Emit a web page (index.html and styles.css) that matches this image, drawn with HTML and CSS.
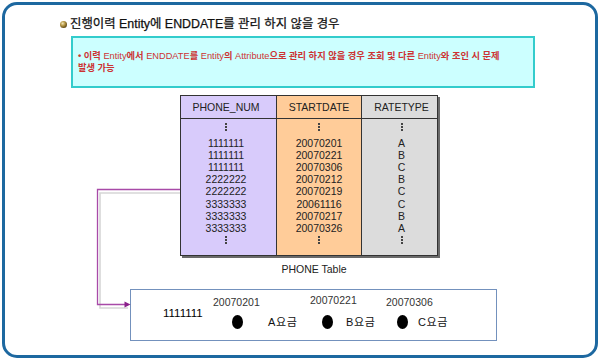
FILE: index.html
```html
<!DOCTYPE html>
<html lang="ko">
<head>
<meta charset="utf-8">
<title>ENDDATE</title>
<link rel="stylesheet" href="styles.css">
</head>
<body>
<div class="panel">
  <svg class="link" width="596" height="356" viewBox="5 5 596 356" aria-hidden="true">
    <polyline points="180,193 100,193 100,308 128,308" fill="none" stroke="#d6d6d6" stroke-width="1.6"/>
    <polyline points="180,189.5 97.5,189.5 97.5,304.5 125,304.5" fill="none" stroke="#a84aa8" stroke-width="1.3"/>
    <polygon points="130.5,304.5 124.5,301.5 124.5,307.5" fill="#8a1f8a"/>
  </svg>

  <h1 class="title"><span class="ball"></span>진행이력 Entity에 ENDDATE를 관리 하지 않을 경우</h1>

  <div class="note">
    <p>• 이력 <span class="en">Entity</span>에서 <span class="en">ENDDATE</span>를 <span class="en">Entity</span>의 <span class="en">Attribute</span>으로 관리 하지 않을 경우 조회 및 다른 <span class="en">Entity</span>와 조인 시 문제<br>발생 가능</p>
  </div>

  <div class="tbl">
    <div class="col c1">
      <div class="th">PHONE_NUM</div>
      <div class="td">
        <i class="vdots"></i>
        <div class="rows">
          <span>1111111</span><span>1111111</span><span>1111111</span><span>2222222</span>
          <span>2222222</span><span>3333333</span><span>3333333</span><span>3333333</span>
        </div>
        <i class="vdots"></i>
      </div>
    </div>
    <div class="col c2">
      <div class="th">STARTDATE</div>
      <div class="td">
        <i class="vdots"></i>
        <div class="rows">
          <span>20070201</span><span>20070221</span><span>20070306</span><span>20070212</span>
          <span>20070219</span><span>20061116</span><span>20070217</span><span>20070326</span>
        </div>
        <i class="vdots"></i>
      </div>
    </div>
    <div class="col c3">
      <div class="th">RATETYPE</div>
      <div class="td">
        <i class="vdots"></i>
        <div class="rows">
          <span>A</span><span>B</span><span>C</span><span>B</span>
          <span>C</span><span>C</span><span>B</span><span>A</span>
        </div>
        <i class="vdots"></i>
      </div>
    </div>
  </div>
  <div class="caption">PHONE Table</div>

  <div class="timeline">
    <div class="num">1111111</div>
    <div class="grp g1">
      <div class="date">20070201</div>
      <div class="mark"><span class="dot"></span><span class="lbl">A요금</span></div>
    </div>
    <div class="grp g2">
      <div class="date">20070221</div>
      <div class="mark"><span class="dot"></span><span class="lbl">B요금</span></div>
    </div>
    <div class="grp g3">
      <div class="date">20070306</div>
      <div class="mark"><span class="dot"></span><span class="lbl">C요금</span></div>
    </div>
  </div>
</div>
</body>
</html>
```
FILE: styles.css
```css
html, body {
  margin: 0;
  padding: 0;
  background: #ffffff;
}

body {
  font-family: "Liberation Sans", "Noto Sans CJK KR", sans-serif;
  color: #111111;
}

.panel {
  position: relative;
  margin: 2px;
  width: 596px;
  height: 356px;
  box-sizing: border-box;
  border: 3px solid #1d68a0;
  border-radius: 15px;
  display: flex;
  flex-direction: column;
  align-items: flex-start;
}

.link {
  position: absolute;
  left: 0;
  top: 0;
  pointer-events: none;
}

.title {
  display: flex;
  align-items: center;
  margin: 11px 0 0 55px;
  font-size: 12.4px;
  font-weight: normal;
  line-height: 16px;
  color: #111111;
  white-space: nowrap;
  -webkit-text-stroke: 0.25px #111111;
}

.ball {
  display: inline-block;
  width: 7px;
  height: 7px;
  border-radius: 50%;
  margin-right: 3px;
  background: radial-gradient(circle at 38% 35%, #f2e6b8 0, #b89a48 35%, #5e4612 75%, #3a2a06 100%);
}

.note {
  margin: 4px 0 0 66px;
  width: 464px;
  height: 52px;
  box-sizing: border-box;
  border: 2px solid #33cccc;
  background: #ccffff;
  padding: 12px 2px 0 5px;
}

.note p {
  margin: 0;
  font-size: 9.25px;
  line-height: 12px;
  font-weight: bold;
  color: #cc3333;
  white-space: nowrap;
}

.note .en {
  font-weight: normal;
}

.tbl {
  margin: 7px 0 0 175px;
  display: grid;
  grid-template-columns: 95px 85px 76px;
  width: 258px;
  height: 161px;
  box-sizing: border-box;
  border: 1px solid #333333;
  box-shadow: 2px 2px 0 #6a6a6a;
  position: relative;
  z-index: 1;
}

.col {
  display: flex;
  flex-direction: column;
  color: #222222;
}

.col + .col {
  border-left: 1px solid #333333;
}

.c1 { background: #d8cbfb; }
.c2 { background: #ffcc99; }
.c3 { background: #dcdcdc; }

.c1 .th, .c1 .td { padding-right: 5px; }
.c3 .th, .c3 .td { padding-left: 4px; }

.th {
  height: 22px;
  border-bottom: 1px solid #333333;
  display: flex;
  align-items: center;
  justify-content: center;
  font-size: 10.5px;
}

.td {
  flex: 1;
  display: flex;
  flex-direction: column;
  align-items: center;
  padding-top: 4px;
  font-size: 10.5px;
}

.vdots {
  display: block;
  width: 2px;
  height: 8px;
  background: repeating-linear-gradient(to bottom, #444444 0, #444444 2px, transparent 2px, transparent 3px);
}

.rows {
  display: flex;
  flex-direction: column;
  align-items: center;
  margin: 5.5px 0 2px;
  line-height: 12.2px;
}

.caption {
  margin: 7px 0 0 180px;
  width: 258px;
  text-align: center;
  font-size: 10.5px;
  line-height: 13px;
  color: #222222;
}

.timeline {
  margin: 13px 0 0 125px;
  width: 367px;
  height: 52px;
  box-sizing: border-box;
  border: 1px solid #7391bd;
  display: flex;
  align-items: flex-start;
  padding: 6px 0 0 32px;
}

.num {
  width: 50px;
  margin-top: 10.5px;
  font-size: 11.5px;
  line-height: 13px;
  color: #000000;
}

.grp {
  display: flex;
  flex-direction: column;
}

.date {
  font-size: 10.5px;
  line-height: 13px;
  color: #333333;
}

.mark {
  display: flex;
  align-items: center;
  margin-top: 6px;
  height: 14px;
}

.dot {
  display: block;
  width: 11px;
  height: 14px;
  border-radius: 50%;
  background: #000000;
}

.lbl {
  font-size: 11px;
  line-height: 14px;
  letter-spacing: 0.6px;
  color: #111111;
}

.g1 { width: 97px; }
.g1 .dot { margin-left: 18.5px; margin-right: 25.5px; }

.g2 { width: 76px; }
.g2 .date { margin-top: -2px; margin-bottom: 2px; }
.g2 .dot { margin-left: 12px; margin-right: 13px; }

.g3 .dot { margin-left: 11px; margin-right: 10px; }
```
